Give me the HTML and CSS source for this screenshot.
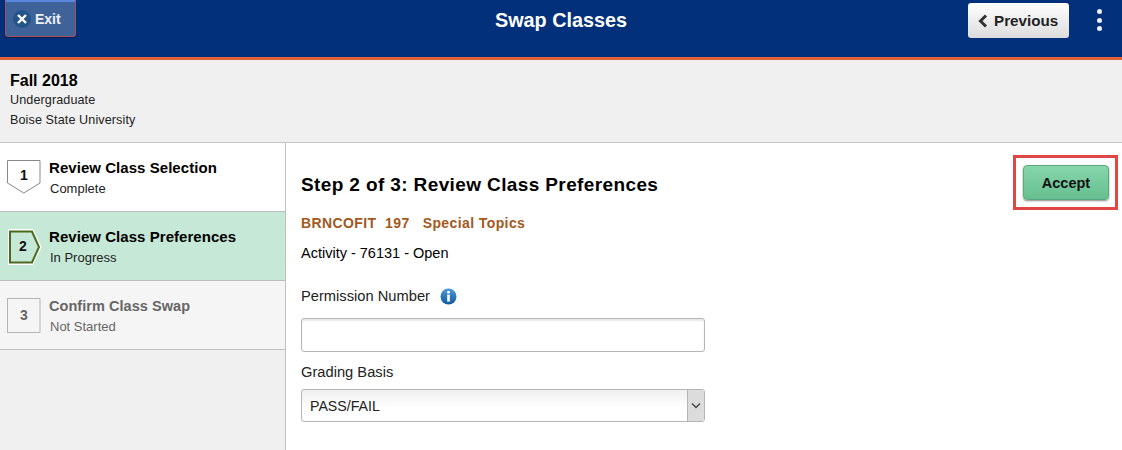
FILE: index.html
```html
<!DOCTYPE html>
<html lang="en">
<head>
  <meta charset="UTF-8" />
  <title>Swap Classes</title>
  <link rel="stylesheet" href="styles.css">
</head>
<body>

  <div class="banner">
    <a class="exit-btn">
      <span class="exit-icon">
        <svg width="10" height="10" viewBox="0 0 10 10"><path d="M1 1 L9 9 M9 1 L1 9" stroke="#fff" stroke-width="2.4" fill="none"/></svg>
      </span>
      Exit
    </a>
    <div class="banner-title">Swap Classes</div>
    <div class="banner-right">
      <a class="prev-btn">
        <svg width="10" height="14" viewBox="0 0 10 14"><path d="M8 1.5 L2.5 7 L8 12.5" stroke="#333" stroke-width="3" fill="none"/></svg>
        Previous
      </a>
      <div class="more-dots"><span></span><span></span><span></span></div>
    </div>
  </div>

  <div class="term-band">
    <div class="term-name">Fall 2018</div>
    <div class="term-line">Undergraduate</div>
    <div class="term-line">Boise State University</div>
  </div>

  <div class="main">
    <div class="steps">
      <div class="step">
        <svg class="step-badge" width="35" height="36" viewBox="0 0 35 36"><path d="M0.5 0.5 H33 V23 L16.75 33 L0.5 23 Z" fill="#fff" stroke="#888" stroke-width="1"/><text x="17" y="20" text-anchor="middle" class="badge-num">1</text></svg>
        <div class="step-text">
          <div class="step-title">Review Class Selection</div>
          <div class="step-status">Complete</div>
        </div>
      </div>
      <div class="step current">
        <svg class="step-badge" width="35" height="36" viewBox="0 0 35 36"><path d="M2 1 H25.5 L33.5 18 L25.5 35 H2 Z" fill="#fff" stroke="#fff" stroke-width="2"/><path d="M3 2.5 H25 L32 18 L25 33.5 H3 Z" fill="#c6e8d6" stroke="#4a6a1f" stroke-width="2"/><text x="16" y="22" text-anchor="middle" class="badge-num">2</text></svg>
        <div class="step-text">
          <div class="step-title">Review Class Preferences</div>
          <div class="step-status">In Progress</div>
        </div>
      </div>
      <div class="step todo">
        <svg class="step-badge" width="35" height="37" viewBox="0 0 35 37"><rect x="0.5" y="1.5" width="32.5" height="34" fill="#f5f5f5" stroke="#b5b5b5" stroke-width="1"/><text x="17" y="23" text-anchor="middle" class="badge-num muted">3</text></svg>
        <div class="step-text">
          <div class="step-title">Confirm Class Swap</div>
          <div class="step-status">Not Started</div>
        </div>
      </div>
    </div>

    <div class="content">
      <div class="content-head">
        <h1 class="page-title">Step 2 of 3: Review Class Preferences</h1>
        <div class="accept-mark"><a class="accept-btn">Accept</a></div>
      </div>
      <div class="class-name"><span>BRNCOFIT&nbsp; 197</span><span>Special Topics</span></div>
      <div class="activity">Activity - 76131 - Open</div>

      <div class="field-label perm-label">
        Permission Number
        <svg width="17" height="17" viewBox="0 0 17 17">
          <defs><linearGradient id="infoFill" x1="0" y1="0" x2="0" y2="1"><stop offset="0" stop-color="#4f9bd9"/><stop offset="1" stop-color="#11599f"/></linearGradient></defs>
          <circle cx="8.5" cy="8.5" r="8" fill="url(#infoFill)"/>
          <rect x="7.2" y="3" width="2.6" height="2.4" fill="#fff"/>
          <rect x="7.2" y="6.6" width="2.6" height="7" fill="#fff"/>
        </svg>
      </div>
      <input class="text-input" type="text" />

      <div class="field-label grade-label">Grading Basis</div>
      <div class="select-box">
        <span class="select-value">PASS/FAIL</span>
        <span class="select-arrow">
          <svg width="10" height="7" viewBox="0 0 10 7"><path d="M1 1.5 L5 5.5 L9 1.5" stroke="#444" stroke-width="1.3" fill="none"/></svg>
        </span>
      </div>
    </div>
  </div>

</body>
</html>
```

FILE: styles.css
```css
* {
  margin: 0;
  padding: 0;
  box-sizing: border-box;
}

html, body {
  height: 450px;
  overflow: hidden;
}

body {
  font-family: "Liberation Sans", Arial, sans-serif;
  background: #fff;
  color: #000;
  font-size: 14px;
}

.banner {
  height: 60px;
  background: #03307a;
  border-bottom: 3px solid #e2613a;
  display: flex;
  align-items: flex-start;
  justify-content: space-between;
  padding-left: 5px;
  position: relative;
}

.exit-btn {
  width: 71px;
  height: 37px;
  background: #3f6299;
  border: 1px solid #a5505a;
  border-top: 2px solid #5a85dd;
  border-radius: 0 0 3px 3px;
  box-shadow: 0 1px 1px #021f50;
  color: #eef2f8;
  font-weight: bold;
  font-size: 14px;
  display: flex;
  align-items: center;
  gap: 4px;
  padding-left: 7px;
}

.exit-icon {
  width: 18px;
  height: 18px;
  border-radius: 50%;
  background: #24558a;
  display: flex;
  align-items: center;
  justify-content: center;
}

.banner-title {
  position: absolute;
  left: 0;
  right: 0;
  top: 9px;
  text-align: center;
  color: #fff;
  font-size: 19.8px;
  line-height: 23px;
  font-weight: bold;
}

.banner-right {
  display: flex;
  align-items: flex-start;
  position: relative;
}

.prev-btn {
  width: 101px;
  height: 35px;
  margin-top: 3px;
  background: linear-gradient(#fff, #dcdcdc);
  border-radius: 3px;
  color: #222;
  font-weight: bold;
  font-size: 15.2px;
  display: flex;
  align-items: center;
  gap: 6px;
  padding-left: 10px;
}

.more-dots {
  width: 53px;
  padding: 9px 0 0 7px;
  display: flex;
  flex-direction: column;
  align-items: center;
  gap: 3.5px;
}

.more-dots span {
  width: 5px;
  height: 5px;
  border-radius: 50%;
  background: #eef2f8;
}

.term-band {
  height: 83px;
  background: #f0f0f0;
  border-bottom: 1px solid #c4c4c4;
  padding: 12px 10px 0;
}

.term-name {
  font-size: 16px;
  line-height: 18px;
  font-weight: bold;
}

.term-line {
  font-size: 12.6px;
  letter-spacing: 0.1px;
  line-height: 20px;
  color: #222;
}

.main {
  display: flex;
  height: 307px;
}

.steps {
  width: 286px;
  background: #f0f0f0;
  border-right: 1px solid #c0c0c0;
  flex-shrink: 0;
}

.step {
  height: 69px;
  background: #fff;
  border-bottom: 1px solid #bdbdbd;
  display: flex;
  align-items: flex-start;
  gap: 7px;
  padding: 16px 0 0 7px;
}

.step.current {
  background: #c6e8d6;
}

.step.todo {
  background: #f5f5f5;
  color: #666;
}

.step-badge {
  flex-shrink: 0;
  margin-top: 1px;
}

.step.todo .step-badge {
  margin-top: 0;
}

.badge-num {
  font-family: "Liberation Sans", Arial, sans-serif;
  font-size: 14px;
  font-weight: bold;
  fill: #111;
}

.badge-num.muted {
  fill: #666;
}

.step-title {
  font-size: 15px;
  line-height: 18px;
  font-weight: bold;
  letter-spacing: 0.05px;
}

.step.todo .step-title {
  font-size: 14.5px;
}

.step-status {
  font-size: 13px;
  line-height: 20px;
  margin: 2px 0 0 1px;
  color: #222;
}

.step.todo .step-status {
  color: #666;
}

.content {
  flex: 1;
  padding: 12px 4px 0 15px;
}

.content-head {
  display: flex;
  justify-content: space-between;
  align-items: center;
  height: 55px;
}

.page-title {
  font-size: 19px;
  letter-spacing: 0.38px;
  line-height: 22px;
  font-weight: bold;
  margin-top: 4px;
}

.accept-mark {
  border: 3px solid #e04646;
  padding: 7px 6px 7px 7px;
}

.accept-btn {
  display: flex;
  align-items: center;
  justify-content: center;
  width: 86px;
  height: 35px;
  background: linear-gradient(#86d6ab, #66bf90);
  border: 1px solid #5aa880;
  border-radius: 4px;
  box-shadow: 0 1px 2px #888;
  font-weight: bold;
  font-size: 14.5px;
  color: #111;
}

.class-name {
  display: flex;
  gap: 13px;
  margin-top: 4px;
  font-size: 14px;
  line-height: 18px;
  font-weight: bold;
  color: #a4581c;
  letter-spacing: 0.4px;
}

.activity {
  margin-top: 12px;
  font-size: 14.5px;
  line-height: 18px;
}

.field-label {
  font-size: 14.7px;
  line-height: 18px;
  color: #222;
}

.perm-label {
  display: flex;
  align-items: center;
  gap: 10px;
  margin-top: 25px;
}

.grade-label {
  margin-top: 11px;
}

.text-input {
  display: block;
  width: 404px;
  height: 34px;
  margin-top: 13px;
  background: #fff;
  border: 1px solid #b5b5b5;
  border-radius: 3px;
  box-shadow: inset 0 2px 2px #e8e8e8;
}

.select-box {
  display: flex;
  justify-content: space-between;
  width: 404px;
  height: 33px;
  margin-top: 8px;
  background: linear-gradient(#f0f0f0, #fff 60%);
  border: 1px solid #b5b5b5;
  border-radius: 3px;
}

.select-value {
  font-size: 14.2px;
  line-height: 32px;
  padding-left: 8px;
  color: #222;
}

.select-arrow {
  width: 17px;
  background: #dcdcdc;
  border-left: 1px solid #b5b5b5;
  display: flex;
  align-items: center;
  justify-content: center;
}
```
